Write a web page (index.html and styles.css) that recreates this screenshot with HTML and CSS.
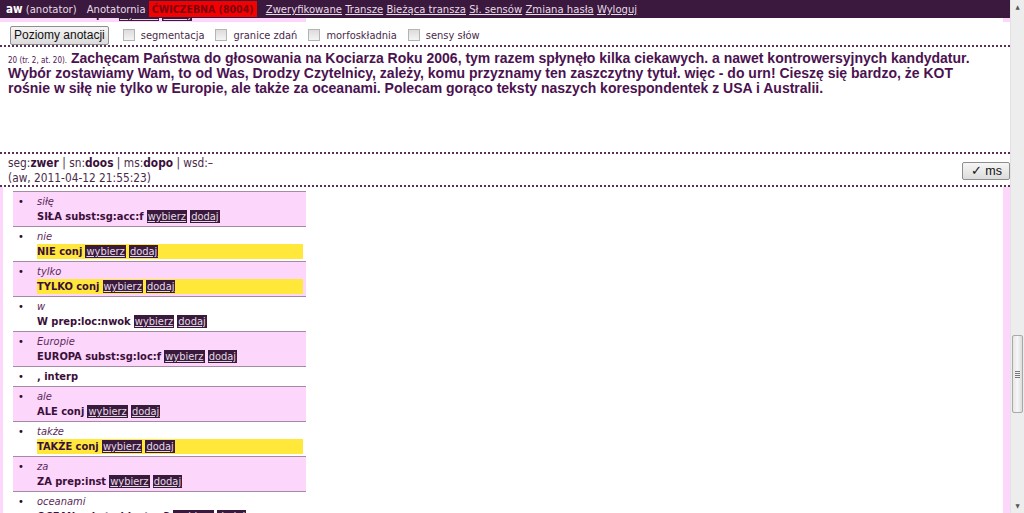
FILE: index.html
```html
<!DOCTYPE html>
<html lang="pl">
<head>
<meta charset="utf-8">
<title>Anotatornia</title>
<link rel="stylesheet" href="styles.css">
</head>
<body>
<div class="page">
  <div class="topbar">
    <b class="user">aw</b> <span>(anotator)</span><span class="app">Anotatornia</span> <span class="badge">ĆWICZEBNA (8004)</span>
    <a class="first" href="#">Zweryfikowane</a> <a href="#">Transze</a> <a href="#">Bieżąca transza</a> <a href="#">Sł. sensów</a> <a href="#">Zmiana hasła</a> <a href="#">Wyloguj</a>
  </div>
  <div class="peek">
    <div class="peek-item"><span class="lemma">BARDZO dawpos</span> <a class="act" href="#">wybierz</a> <a class="act" href="#">dodaj</a></div>
    <div class="peek-fill"></div>
  </div>
  <div class="panel">
    <div class="toolbar">
      <button class="btn">Poziomy anotacji</button>
      <label class="chk"><span class="box"></span>segmentacja</label>
      <label class="chk"><span class="box"></span>granice zdań</label>
      <label class="chk"><span class="box"></span>morfoskładnia</label>
      <label class="chk"><span class="box"></span>sensy słów</label>
    </div>
    <div class="textarea">
      <p class="para"><span class="ref">20 (tr. 2, at. 20).</span> Zachęcam Państwa do głosowania na Kociarza Roku 2006, tym razem spłynęło kilka ciekawych. a nawet kontrowersyjnych kandydatur. Wybór zostawiamy Wam, to od Was, Drodzy Czytelnicy, zależy, komu przyznamy ten zaszczytny tytuł. więc - do urn! Cieszę się bardzo, że KOT rośnie w siłę nie tylko w Europie, ale także za oceanami. Polecam gorąco teksty naszych korespondentek z USA i Australii.</p>
    </div>
    <div class="meta">
      <div class="meta-text">
        <div>seg:<b>zwer</b> | sn:<b>doos</b> | ms:<b>dopo</b> | wsd:–</div>
        <div>(aw, 2011-04-12 21:55:23)</div>
      </div>
      <button class="btn btn-ms">✓ ms</button>
    </div>
  </div>
  <div class="main">
    <ul class="tokens">
      <li class="tok pink"><span class="dot">•</span><div class="tc"><div class="form">siłę</div><div class="lemma-line"><span class="lemma">SIŁA subst:sg:acc:f</span> <a class="act" href="#">wybierz</a> <a class="act" href="#">dodaj</a></div></div></li>
      <li class="tok"><span class="dot">•</span><div class="tc"><div class="form">nie</div><div class="lemma-line sel"><span class="lemma">NIE conj</span> <a class="act" href="#">wybierz</a> <a class="act" href="#">dodaj</a></div></div></li>
      <li class="tok pink"><span class="dot">•</span><div class="tc"><div class="form">tylko</div><div class="lemma-line sel"><span class="lemma">TYLKO conj</span> <a class="act" href="#">wybierz</a> <a class="act" href="#">dodaj</a></div></div></li>
      <li class="tok"><span class="dot">•</span><div class="tc"><div class="form">w</div><div class="lemma-line"><span class="lemma">W prep:loc:nwok</span> <a class="act" href="#">wybierz</a> <a class="act" href="#">dodaj</a></div></div></li>
      <li class="tok pink"><span class="dot">•</span><div class="tc"><div class="form">Europie</div><div class="lemma-line"><span class="lemma">EUROPA subst:sg:loc:f</span> <a class="act" href="#">wybierz</a> <a class="act" href="#">dodaj</a></div></div></li>
      <li class="tok"><span class="dot">•</span><div class="tc"><div class="lemma-line"><span class="lemma">, interp</span></div></div></li>
      <li class="tok pink"><span class="dot">•</span><div class="tc"><div class="form">ale</div><div class="lemma-line"><span class="lemma">ALE conj</span> <a class="act" href="#">wybierz</a> <a class="act" href="#">dodaj</a></div></div></li>
      <li class="tok"><span class="dot">•</span><div class="tc"><div class="form">także</div><div class="lemma-line sel"><span class="lemma">TAKŻE conj</span> <a class="act" href="#">wybierz</a> <a class="act" href="#">dodaj</a></div></div></li>
      <li class="tok pink"><span class="dot">•</span><div class="tc"><div class="form">za</div><div class="lemma-line"><span class="lemma">ZA prep:inst</span> <a class="act" href="#">wybierz</a> <a class="act" href="#">dodaj</a></div></div></li>
      <li class="tok"><span class="dot">•</span><div class="tc"><div class="form">oceanami</div><div class="lemma-line"><span class="lemma">OCEAN subst:pl:inst:m3</span> <a class="act" href="#">wybierz</a> <a class="act" href="#">dodaj</a></div></div></li>
    </ul>
  </div>
</div>
<div class="scrollbar">
  <div class="sb-arrow">▲</div>
  <div class="sb-track"><div class="sb-thumb"><span class="grip"></span></div></div>
  <div class="sb-arrow">▼</div>
</div>
</body>
</html>
```
FILE: styles.css
```css
html, body {
  margin: 0;
  padding: 0;
  height: 513px;
  overflow: hidden;
}
body {
  display: flex;
  background: #fcd6fb;
  font-family: "DejaVu Sans Condensed", "DejaVu Sans", sans-serif;
  font-stretch: condensed;
  font-size: 11px;
  color: #4a2a4a;
}
.page {
  flex: 1;
  display: flex;
  flex-direction: column;
  min-width: 0;
  background: #fcd6fb;
}
.topbar {
  height: 18px;
  line-height: 18px;
  background: #3b183d;
  color: #e6dce6;
  padding-left: 6px;
  white-space: nowrap;
  font-size: 11.2px;
}
.topbar .user { color: #fff; font-size: 11.5px; }
.topbar .app { margin-left: 10px; }
.topbar .first { margin-left: 6px; }
.topbar a { color: #e6dce6; text-decoration: underline; }
.badge {
  background: #f30000;
  color: #7a0010;
  font-weight: bold;
  font-size: 10.5px;
  padding: 2px 3px;
}
.peek {
  height: 4px;
  display: flex;
  align-items: flex-end;
  overflow: hidden;
}
.peek-item {
  width: 283px;
  padding-left: 23px;
  line-height: 15px;
  background: #fcd6fb;
  flex: none;
  white-space: nowrap;
}
.peek-fill {
  flex: 1;
  height: 4px;
  background: #fff;
  margin-right: 7px;
}
.panel {
  background: #fff;
  display: flex;
  flex-direction: column;
}
.toolbar {
  height: 23px;
  display: flex;
  align-items: center;
  padding-left: 10px;
}
.btn {
  font-family: "Liberation Sans", Arial, sans-serif;
  font-size: 12px;
  color: #111;
  background: linear-gradient(#f6f6f6, #dcdcdc);
  border: 1px solid #8e8e8e;
  border-radius: 2px;
  height: 19px;
  padding: 0 3px;
  margin: 3px 0 0 0;
  line-height: 16px;
}
.chk {
  display: flex;
  align-items: center;
  margin-left: 11px;
  margin-top: 3px;
  color: #4a2a4a;
  font-size: 11px;
}
.chk:first-of-type { margin-left: 14px; }
.chk .box {
  width: 10px;
  height: 10px;
  border: 1px solid #b4b4b4;
  background: linear-gradient(#dcdcdc, #f4f4f4);
  margin-right: 6px;
}
.textarea {
  border-top: 2px dotted #5a2f5a;
  border-bottom: 2px dotted #5a2f5a;
  height: 105px;
  padding: 0 30px 0 8px;
}
.para {
  margin: 4px 0 0 0;
  font-family: "Liberation Sans", Arial, sans-serif;
  font-weight: bold;
  font-size: 14px;
  line-height: 15px;
  color: #4b1250;
}
.ref {
  font-family: "DejaVu Sans Condensed", "DejaVu Sans", sans-serif;
  font-weight: normal;
  font-size: 8px;
  line-height: 10px;
  color: #4b1250;
}
.meta {
  display: flex;
  justify-content: space-between;
  align-items: flex-start;
  padding: 2px 0 0 8px;
  height: 29px;
  border-bottom: 2px dotted #5a2f5a;
  line-height: 15px;
  font-size: 11.8px;
}
.meta b { color: #3a103a; }
.btn-ms {
  margin: 6px 0 0 0;
  height: 18px;
  padding: 0 7px 0 8px;
  font-size: 12.5px;
}
.main {
  flex: 1;
  background: #fff;
  margin: 0 7px 0 3px;
  padding-top: 4px;
  overflow: hidden;
}
.tokens {
  list-style: none;
  margin: 0 0 0 10px;
  padding: 0;
  width: 293px;
  border-top: 1px solid #a48aa4;
}
.tok {
  display: flex;
  border-bottom: 1px solid #a48aa4;
  padding: 2px 3px 2px 0;
  line-height: 15px;
  background: #fff;
}
.tok.pink { background: #fcd6fb; }
.dot {
  width: 24px;
  flex: none;
  padding-left: 5px;
  box-sizing: border-box;
  color: #2a0a2a;
  font-size: 11px;
}
.tc { flex: 1; }
.form {
  font-style: italic;
  color: #5a2a5a;
}
.lemma-line { white-space: nowrap; }
.lemma-line.sel { background: #ffe83a; }
.lemma {
  font-weight: bold;
  color: #3a0f3a;
}
.act {
  background: #3a1a3c;
  color: #e4dae4;
  text-decoration: underline;
  padding: 0 1px;
}
.scrollbar {
  width: 13px;
  flex: none;
  display: flex;
  flex-direction: column;
  background: #ededed;
  border-left: 1px solid #e2e2e2;
}
.sb-arrow {
  height: 14px;
  font-size: 6px;
  line-height: 14px;
  text-align: center;
  color: #555;
}
.sb-track {
  flex: 1;
  display: flex;
  flex-direction: column;
  padding-top: 321px;
}
.sb-thumb {
  height: 76px;
  margin: 0 1px;
  background: linear-gradient(90deg, #e6e6e6, #f6f6f6 50%, #dcdcdc);
  border: 1px solid #a9a9a9;
  border-radius: 2px;
  display: flex;
  align-items: center;
  justify-content: center;
}
.grip {
  width: 5px;
  height: 7px;
  background: repeating-linear-gradient(#777 0 1px, transparent 1px 2px);
}
```
